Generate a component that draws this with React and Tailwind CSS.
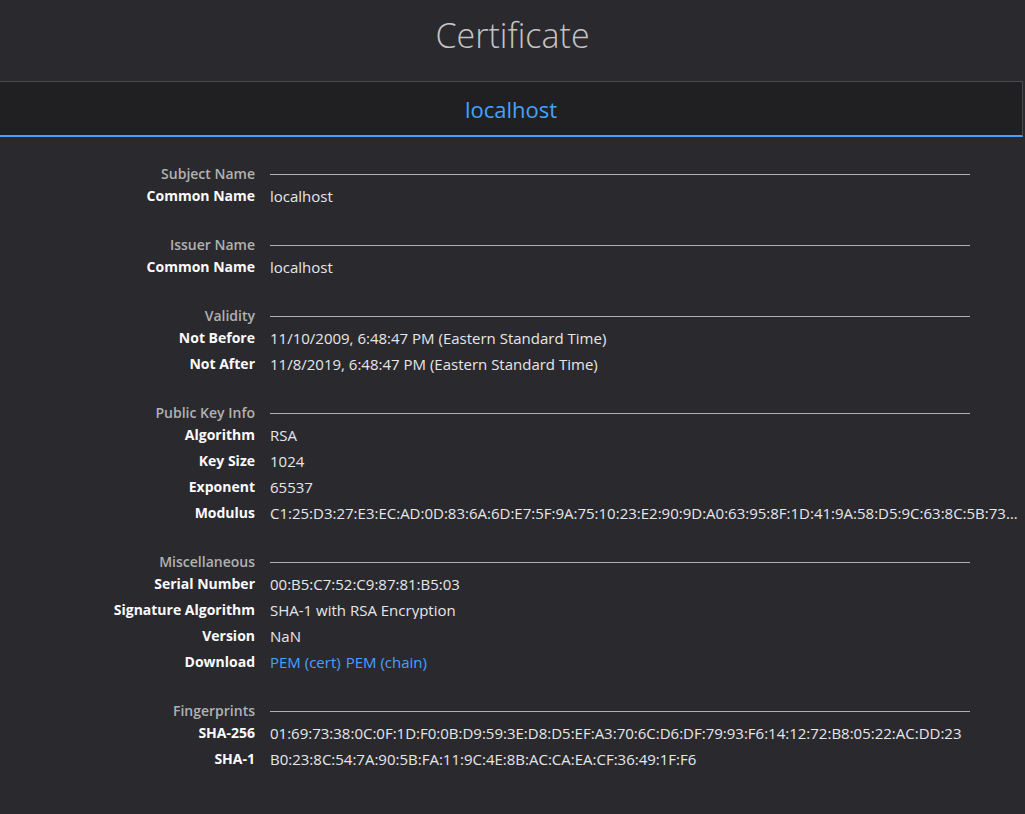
import React from 'react';

const sections = [
  { title: 'Subject Name', rows: [['Common Name', 'localhost']] },
  { title: 'Issuer Name', rows: [['Common Name', 'localhost']] },
  {
    title: 'Validity',
    rows: [
      ['Not Before', '11/10/2009, 6:48:47 PM (Eastern Standard Time)'],
      ['Not After', '11/8/2019, 6:48:47 PM (Eastern Standard Time)'],
    ],
  },
  {
    title: 'Public Key Info',
    rows: [
      ['Algorithm', 'RSA'],
      ['Key Size', '1024'],
      ['Exponent', '65537'],
      [
        'Modulus',
        'C1:25:D3:27:E3:EC:AD:0D:83:6A:6D:E7:5F:9A:75:10:23:E2:90:9D:A0:63:95:8F:1D:41:9A:58:D5:9C:63:8C:5B:73:86:90:79:CC:C3:D6:A3:89:B8:79:BD:8C:E9:6C:EB:D0:F5:BD:F5:CB:73',
      ],
    ],
  },
  {
    title: 'Miscellaneous',
    rows: [
      ['Serial Number', '00:B5:C7:52:C9:87:81:B5:03'],
      ['Signature Algorithm', 'SHA-1 with RSA Encryption'],
      ['Version', 'NaN'],
      ['Download', 'links'],
    ],
  },
  {
    title: 'Fingerprints',
    rows: [
      ['SHA-256', '01:69:73:38:0C:0F:1D:F0:0B:D9:59:3E:D8:D5:EF:A3:70:6C:D6:DF:79:93:F6:14:12:72:B8:05:22:AC:DD:23'],
      ['SHA-1', 'B0:23:8C:54:7A:90:5B:FA:11:9C:4E:8B:AC:CA:EA:CF:36:49:1F:F6'],
    ],
  },
];

const Section = ({ title, rows }) => (
  <div className="mb-[27px]">
    <div className="flex h-[18px] items-center">
      <div className="w-[255px] shrink-0 text-right font-semibold text-[#b1b1b3]">{title}</div>
      <div className="ml-[15px] mr-[55px] flex-1 border-t border-[#b1b1b3]"></div>
    </div>
    {rows.map(([label, value]) => (
      <div key={label} className="flex h-[26px] items-center">
        <div className="w-[255px] shrink-0 text-right font-bold text-[#fbfbfe]">{label}</div>
        {value === 'links' ? (
          <div className="ml-[15px] flex gap-[5px] text-[15px] text-[#45a1ff]">
            <span>PEM (cert)</span>
            <span>PEM (chain)</span>
          </div>
        ) : (
          <div className="ml-[15px] min-w-0 flex-1 truncate pr-[4px] text-[15px] text-[#e6e6e9]">{value}</div>
        )}
      </div>
    ))}
  </div>
);

const App = () => {
  return (
    <div
      className="min-h-screen w-full bg-[#2a2a2e] text-[14px] leading-[18px]"
      style={{ fontFamily: '"Open Sans", "Noto Sans", sans-serif' }}
    >
      <div className="flex h-[81px] items-center justify-center">
        <h1 className="text-[34px] font-light leading-none text-[#c4c4c7] -mt-[11px]">Certificate</h1>
      </div>
      <div className="flex h-[56px] w-[1023px] items-center justify-center border-t border-r border-[#4a4a4f] border-b-2 border-b-[#45a1ff] bg-[#202023]">
        <span className="text-[22px] text-[#45a1ff]">localhost</span>
      </div>
      <div className="pt-[28px] pb-[20px]">
        {sections.map((s) => (
          <Section key={s.title} {...s} />
        ))}
      </div>
    </div>
  );
};

export default App;
